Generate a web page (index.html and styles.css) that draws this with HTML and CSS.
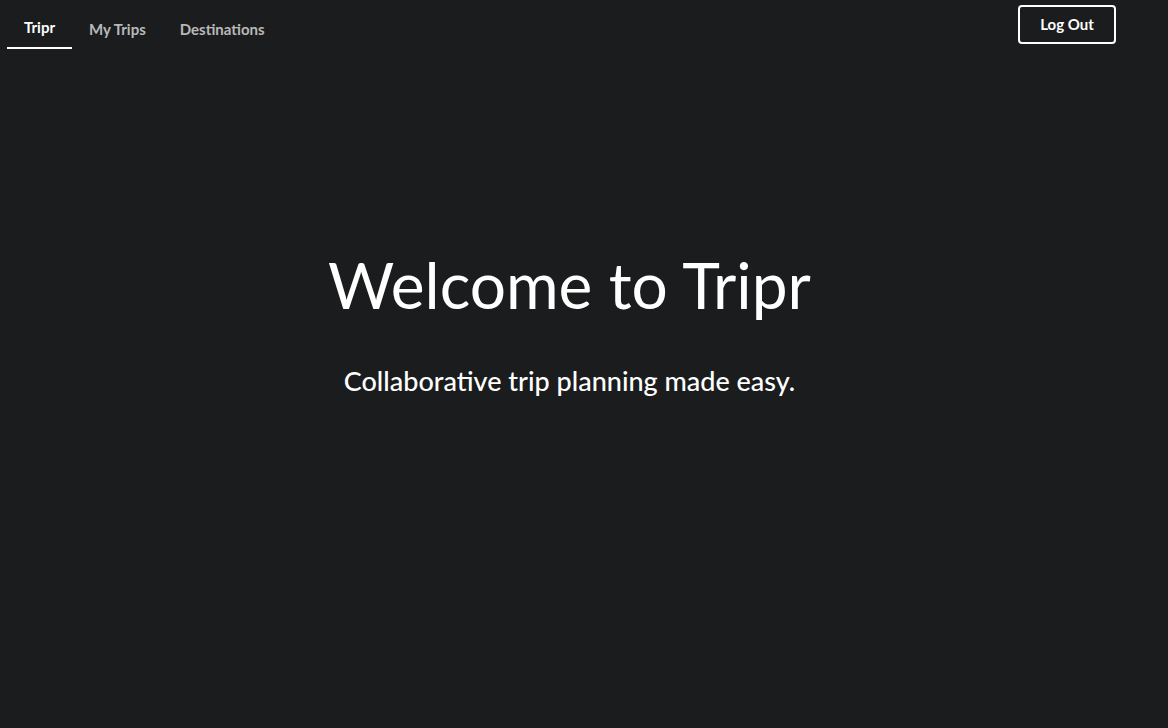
FILE: index.html
```html
<!DOCTYPE html>
<html lang="en">
<head>
<meta charset="utf-8">
<title>Tripr</title>
<link rel="stylesheet" href="styles.css">
</head>
<body>
<div class="page">
  <nav class="menu">
    <div class="tabs">
      <a class="item active">Tripr</a>
      <a class="item">My Trips</a>
      <a class="item">Destinations</a>
    </div>
    <button class="logout">Log Out</button>
  </nav>
  <main class="hero">
    <h1 class="title">Welcome to Tripr</h1>
    <p class="subtitle">Collaborative trip planning made easy.</p>
  </main>
</div>
</body>
</html>
```
FILE: styles.css
```css
html, body {
  margin: 0;
  padding: 0;
  height: 100%;
  background: #1b1c1d;
  font-family: Lato, "Open Sans", sans-serif;
  color: #fff;
}
.page {
  width: 1139px;
  height: 100%;
}
.menu {
  display: flex;
  justify-content: space-between;
  align-items: flex-start;
  padding: 0 23px 0 7px;
}
.tabs {
  display: flex;
}
.item {
  display: block;
  padding: 22px 17px 11px;
  font-size: 15px;
  font-weight: 700;
  line-height: 14px;
  color: rgba(255, 255, 255, 0.7);
  border-bottom: 2px solid transparent;
}
.item.active {
  color: #fff;
  border-bottom-color: #fff;
  padding-top: 20px;
  padding-bottom: 13px;
}
.logout {
  margin-top: 5px;
  width: 98px;
  height: 39px;
  background: transparent;
  border: 2px solid #fff;
  border-radius: 4px;
  color: #fff;
  font-family: Lato, "Open Sans", sans-serif;
  font-weight: 700;
  font-size: 15px;
  padding: 0 0 2px;
}
.hero {
  display: flex;
  flex-direction: column;
  align-items: center;
  padding-top: 196px;
}
.title {
  margin: 0;
  font-size: 64px;
  font-weight: 400;
  line-height: 80px;
}
.subtitle {
  margin: 41px 0 0;
  font-size: 27px;
  font-weight: 500;
  line-height: 30px;
}
```
